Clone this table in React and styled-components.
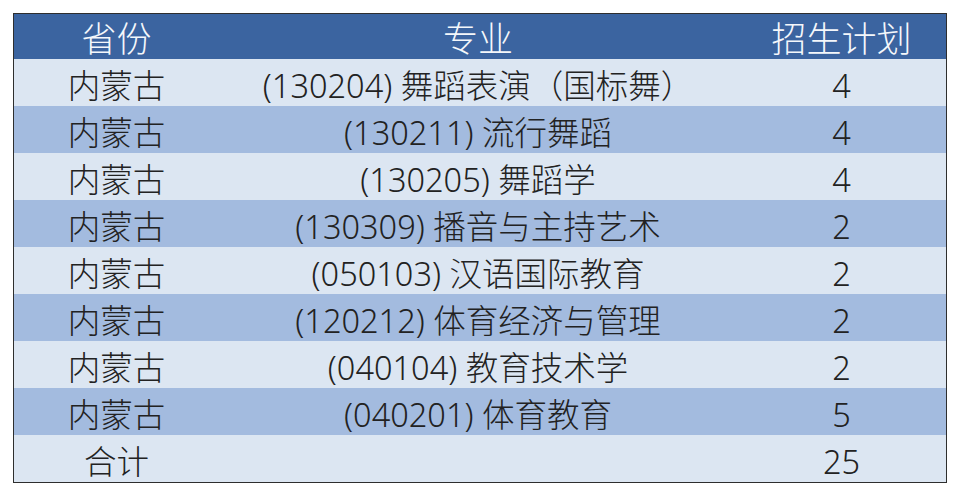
import React from "react";
import styled, { createGlobalStyle } from "styled-components";

const Global = createGlobalStyle`
  html, body { margin: 0; padding: 0; background: #ffffff; }
  body { font-family: "Noto Sans", "Noto Sans CJK SC", sans-serif; }
`;

const Page = styled.div`
  width: 960px;
  height: 496px;
  padding: 13px 0 0 13px;
  box-sizing: border-box;
  background: #ffffff;
`;

const Table = styled.div`
  width: 934px;
  border: 1.5px solid #2e2e2e;
  box-sizing: border-box;
  display: flex;
  flex-direction: column;
`;

const Row = styled.div`
  display: grid;
  grid-template-columns: 205px 1fr 209px;
  height: ${(p) => (p.$header ? 45 : 47)}px;
  background: ${(p) =>
    p.$header ? "#3b64a0" : p.$dark ? "#a3bbdf" : "#dce6f2"};
  color: ${(p) => (p.$header ? "#f4f7fb" : "#222222")};
  font-size: ${(p) => (p.$header ? 35 : 32.5)}px;
  font-weight: 300;
  line-height: ${(p) => (p.$header ? 45 : 47)}px;
`;

const Cell = styled.div`
  text-align: center;
  white-space: nowrap;
  padding-top: ${(p) => (p.$header ? 2 : 3)}px;
  box-sizing: border-box;
`;

const rows = [
  ["内蒙古", "(130204) 舞蹈表演（国标舞）", "4"],
  ["内蒙古", "(130211) 流行舞蹈", "4"],
  ["内蒙古", "(130205) 舞蹈学", "4"],
  ["内蒙古", "(130309) 播音与主持艺术", "2"],
  ["内蒙古", "(050103) 汉语国际教育", "2"],
  ["内蒙古", "(120212) 体育经济与管理", "2"],
  ["内蒙古", "(040104) 教育技术学", "2"],
  ["内蒙古", "(040201) 体育教育", "5"],
];

export default function App() {
  return (
    <Page>
      <Global />
      <Table>
        <Row $header>
          <Cell $header>省份</Cell>
          <Cell $header>专业</Cell>
          <Cell $header>招生计划</Cell>
        </Row>
        {rows.map((r, i) => (
          <Row key={i} $dark={i % 2 === 1}>
            <Cell>{r[0]}</Cell>
            <Cell>{r[1]}</Cell>
            <Cell>{r[2]}</Cell>
          </Row>
        ))}
        <Row>
          <Cell>合计</Cell>
          <Cell></Cell>
          <Cell>25</Cell>
        </Row>
      </Table>
    </Page>
  );
}
